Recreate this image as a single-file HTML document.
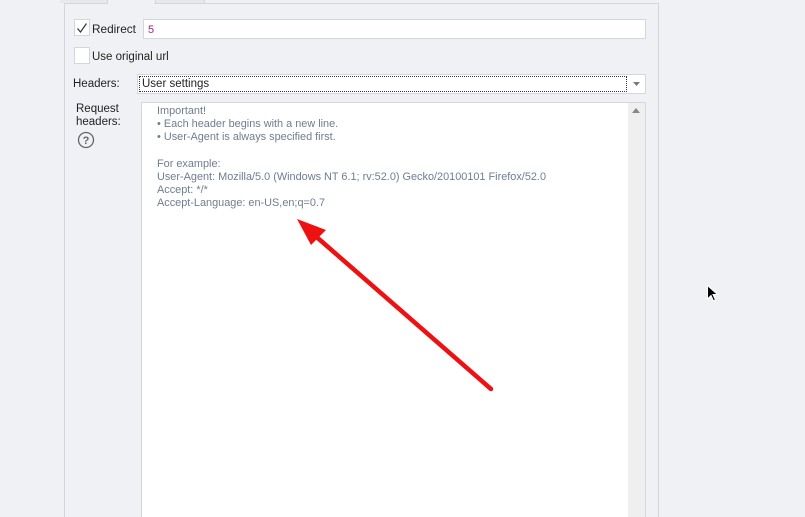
<!DOCTYPE html>
<html><head><meta charset="utf-8"><style>
html,body{margin:0;padding:0;overflow:hidden}
body{width:805px;height:517px;background:#f0f1f5;position:relative;overflow:hidden;font-family:"Liberation Sans",Tahoma,sans-serif;font-size:11.5px;color:#222}
.a{position:absolute}
.box{background:#fff;border:1px solid #d3d6dc;box-sizing:border-box}
.ta{color:#6f7d90;line-height:13.2px;font-size:10.9px}
</style></head><body>
<div class="a" style="left:60px;top:0;width:47px;height:3px;background:#e6e8ec;border-right:1px solid #d3d6dc"></div>
<div class="a" style="left:155px;top:0;width:48px;height:3px;background:#e6e8ec;border-left:1px solid #d3d6dc;border-right:1px solid #d3d6dc"></div>
<div class="a" style="left:64px;top:3px;width:595px;height:514px;border:1px solid #d3d6dc;border-bottom:none;box-sizing:border-box"></div>
<div class="a" style="left:108px;top:3px;width:46px;height:1px;background:#f0f1f5"></div>
<div class="a box" style="left:74px;top:19px;width:16px;height:17px"></div>
<svg class="a" style="left:76px;top:22px" width="12" height="12"><path d="M1.5 6.5 L4.5 10 L10.5 1.5" stroke="#333" stroke-width="1.2" fill="none"/></svg>
<div class="a" style="left:92px;top:22px;font-size:11.8px">Redirect</div>
<div class="a box" style="left:143px;top:19px;width:503px;height:20px"></div>
<div class="a" style="left:148px;top:24px;color:#a0208a;font-size:11px">5</div>
<div class="a box" style="left:74px;top:47px;width:16px;height:17px"></div>
<div class="a" style="left:92px;top:51px">Use original url</div>
<div class="a" style="left:73px;top:78px">Headers:</div>
<div class="a box" style="left:137px;top:74px;width:509px;height:20px"></div>
<div class="a" style="left:139px;top:76px;width:488px;height:16px;border:1px dotted #333;box-sizing:border-box"></div>
<div class="a" style="left:142px;top:78px">User settings</div>
<svg class="a" style="left:633px;top:82px" width="8" height="5"><path d="M0 0H7L3.5 4Z" fill="#777"/></svg>
<div class="a" style="left:76px;top:103px;line-height:13px">Request<br>headers:</div>
<svg class="a" style="left:77px;top:131px" width="18" height="18"><circle cx="9" cy="9" r="7.5" fill="none" stroke="#666" stroke-width="1.3"/><text x="9" y="13" text-anchor="middle" font-family="Liberation Sans" font-size="11" font-weight="bold" fill="#666">?</text></svg>
<div class="a box" style="left:141px;top:102px;width:505px;height:420px"></div>
<div class="a" style="left:628px;top:103px;width:17px;height:420px;background:#efefef"></div>
<svg class="a" style="left:632px;top:108px" width="9" height="6"><path d="M0 5H8L4 0Z" fill="#888"/></svg>
<div class="a ta" style="left:157px;top:105px">Important!<br>&#8226; Each header begins with a new line.<br>&#8226; User-Agent is always specified first.<br><br>For example:<br>User-Agent: Mozilla/5.0 (Windows NT 6.1; rv:52.0) Gecko/20100101 Firefox/52.0<br>Accept: */*<br>Accept-Language: en-US,en;q=0.7</div>
<svg class="a" style="left:0;top:0" width="805" height="517"><line x1="491" y1="389" x2="312" y2="233" stroke="#ee1111" stroke-width="4.5" stroke-linecap="round"/><path d="M297 219 L326 230 L311 245 Z" fill="#ee1111"/></svg>
<svg class="a" style="left:707px;top:285px" width="12" height="18"><path d="M0.5 0.5V14L4 10.5L6.5 16L8.5 15L6 9.5H10.5Z" fill="#000" stroke="#fff" stroke-width="1"/></svg>
</body></html>
